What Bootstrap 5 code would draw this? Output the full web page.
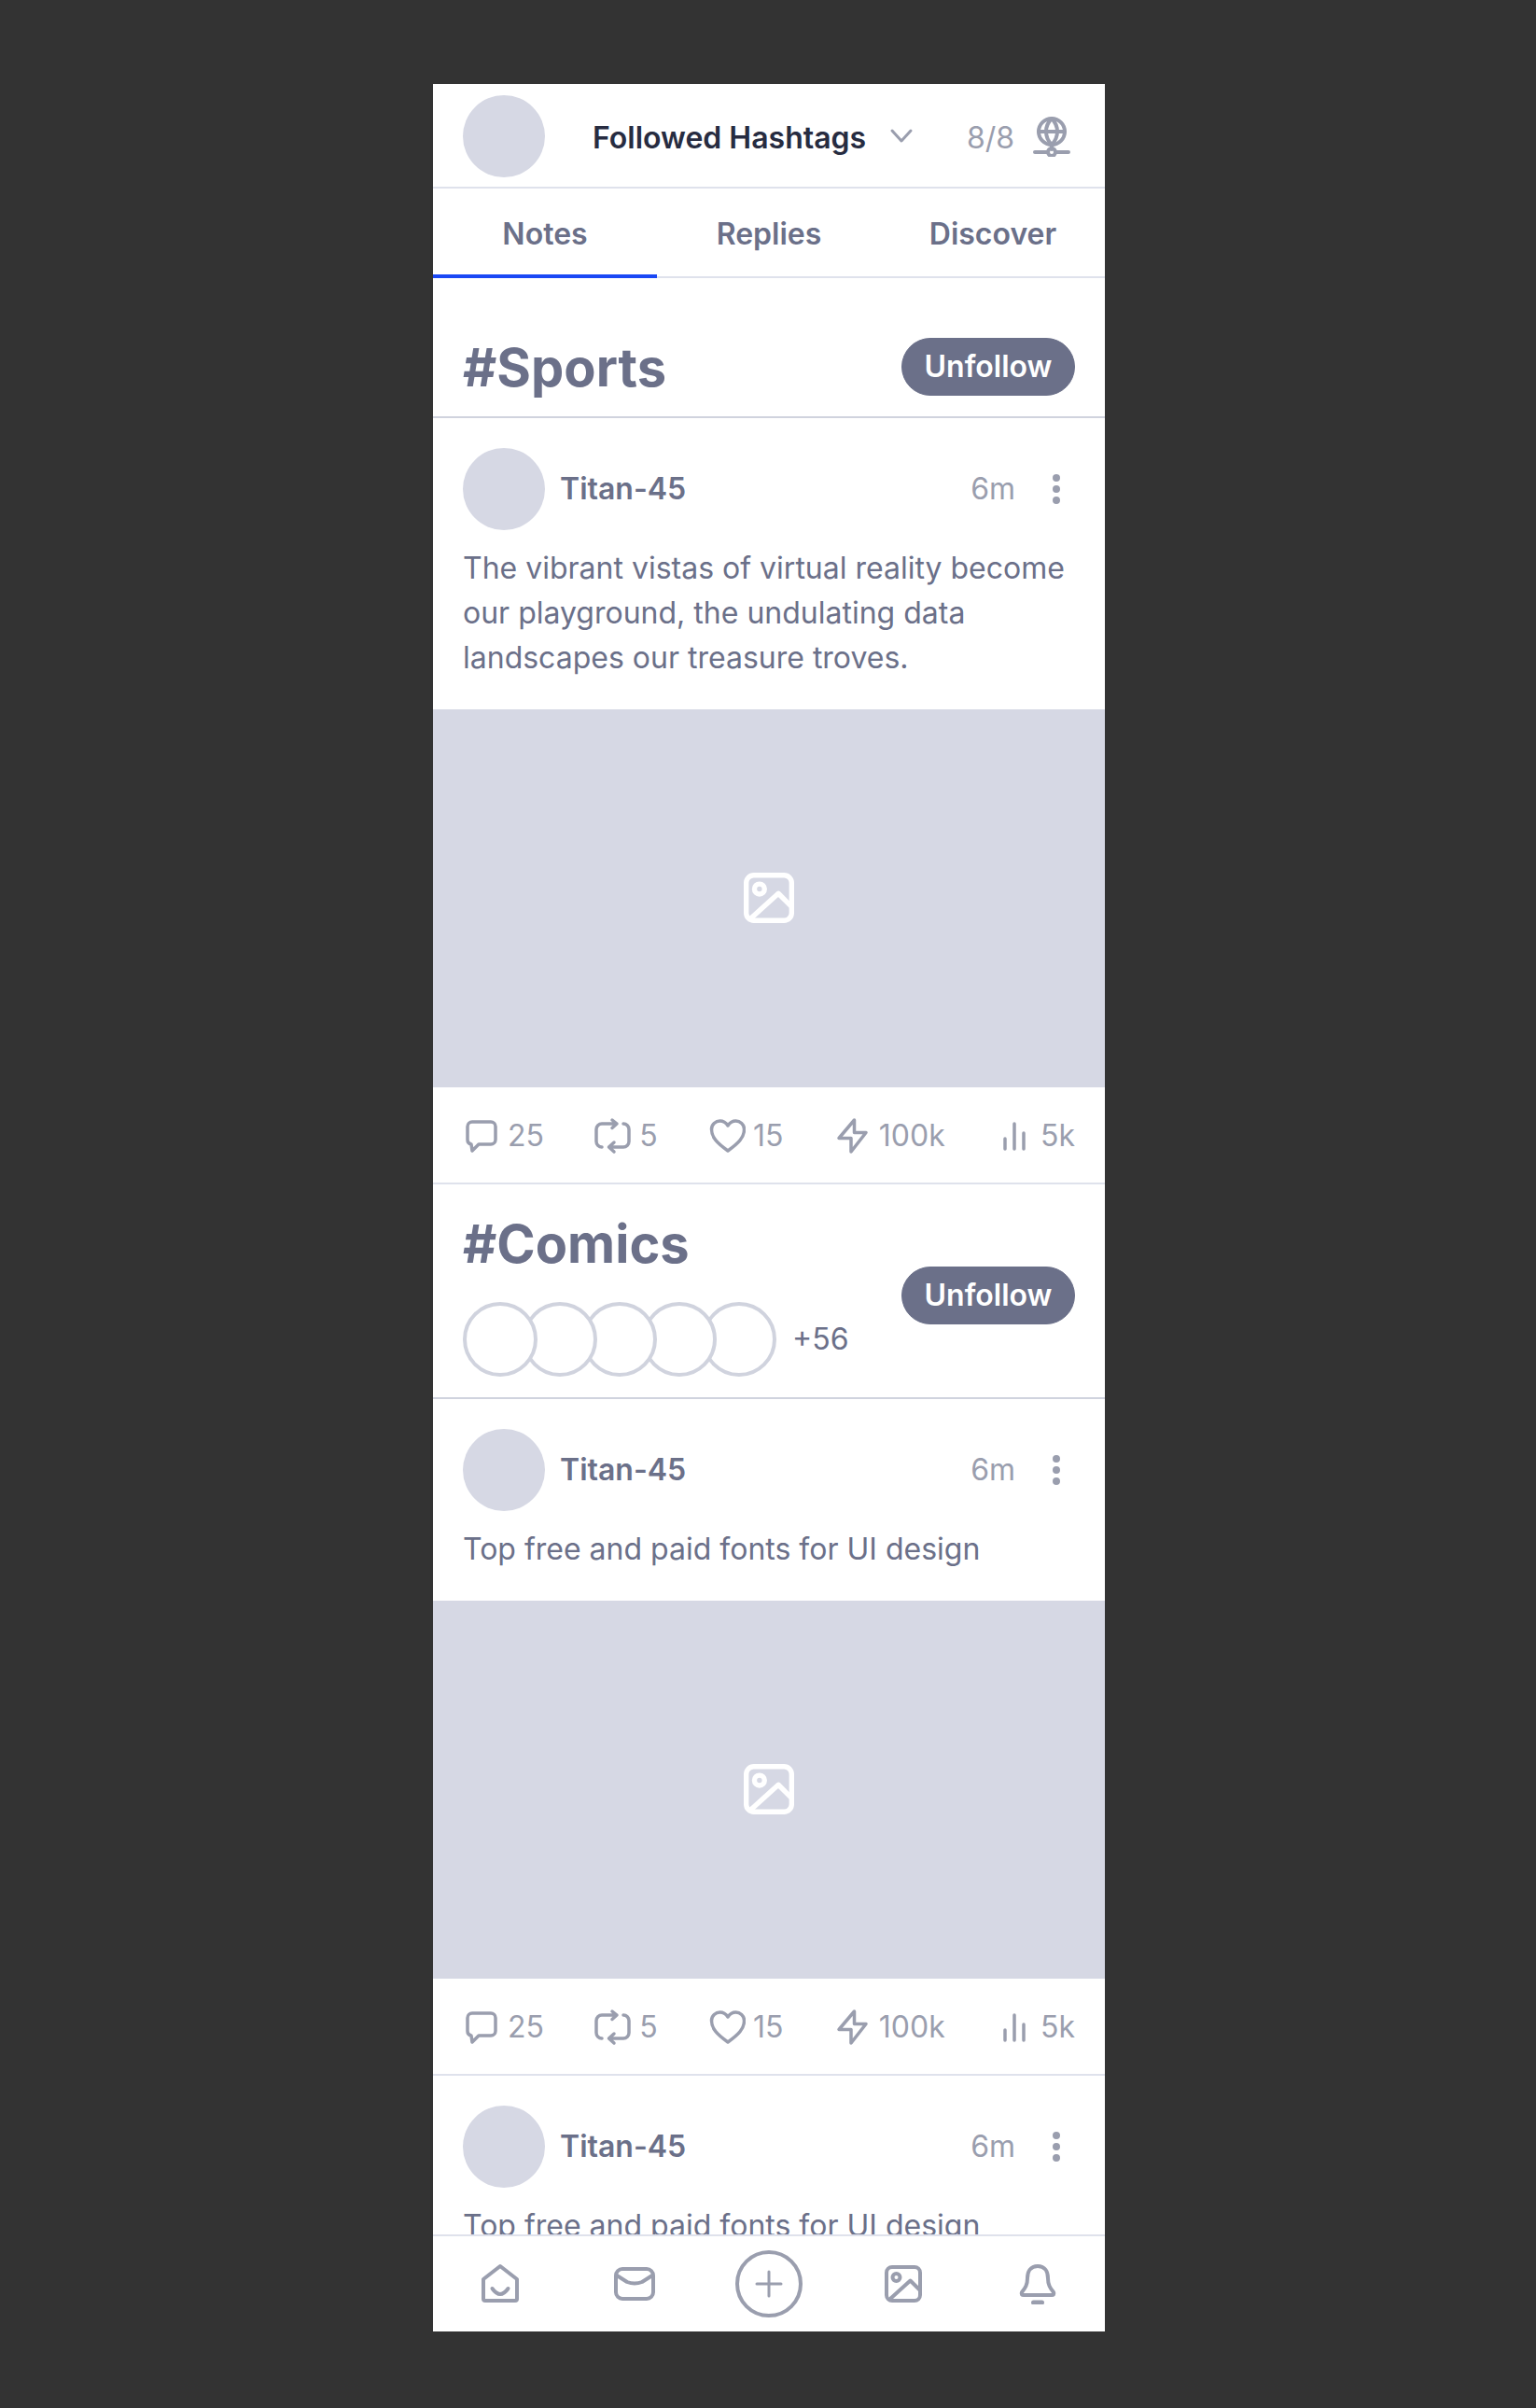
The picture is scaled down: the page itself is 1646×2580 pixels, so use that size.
<!DOCTYPE html>
<html lang="en">

<head>
    <meta charset="UTF-8">
    <meta name="viewport" content="width=device-width, initial-scale=1.0">
    <title>Followed Hashtags</title>
    <link href="https://cdn.jsdelivr.net/npm/bootstrap@5.3.1/dist/css/bootstrap.min.css" rel="stylesheet">
    <style>
        body {
            background: #333333;
            font-family: "Inter", "Liberation Sans", sans-serif;
            font-size: 32px;
            line-height: 48px;
            color: #6b7089;
            min-height: 2580px;
        }

        .phone {
            width: 720px;
            height: 2408px;
            margin: 90px 462px 0 464px;
            background: #fff;
        }

        .thumb {
            width: 88px;
            height: 88px;
            background: #d6d8e4;
        }

        .top-bar {
            padding: 12px 35px 10px 32px;
            border-bottom: 2px solid #dfe2ec;
        }

        .top-title {
            margin: 3px 0 0 51px;
            font-weight: 600;
            color: #272c41;
            white-space: nowrap;
        }

        .top-gap {
            margin-left: 18px;
        }

        .top-count {
            margin-top: 3px;
        }

        .quiet {
            color: #9a9eae;
        }

        .tabs {
            height: 96px;
            border-bottom: 2px solid #dfe2ec;
        }

        .tabs .nav-link {
            height: 96px;
            padding: 25px 0 0;
            font-weight: 600;
            color: #6b7089;
        }

        .tabs .nav-link.active {
            border-bottom: 4px solid #1a48f5;
        }

        .tag-head {
            padding: 32px 32px 22px;
            border-bottom: 2px solid #d0d3de;
        }

        .tag-first {
            padding-top: 64px;
        }

        .tag-name {
            margin: 1px 0 -1px;
            font-size: 56px;
            line-height: 62px;
            font-weight: 700;
            color: #6b7089;
        }

        .tag-rings {
            margin-top: 32px;
        }

        .btn.follow-btn {
            width: 186px;
            height: 62px;
            padding: 0;
            font-size: 32px;
            font-weight: 600;
            line-height: 60px;
            color: #fff;
            background: #6b7089;
            border-color: #6b7089;
        }

        .ring {
            position: relative;
            width: 80px;
            height: 80px;
            background: #fff;
            border: 4px solid #d0d3de;
            margin-left: -16px;
        }

        .ring:first-child {
            margin-left: 0;
            z-index: 5;
        }

        .ring:nth-child(2) {
            z-index: 4;
        }

        .ring:nth-child(3) {
            z-index: 3;
        }

        .ring:nth-child(4) {
            z-index: 2;
        }

        .ring:nth-child(5) {
            z-index: 1;
        }

        .ring-count {
            margin-left: 17px;
        }

        .post-head {
            padding: 32px 32px 0;
        }

        .post-name {
            margin-left: 16px;
            font-weight: 600;
        }

        .post-text {
            padding: 17px 32px 31px;
            margin: 0;
        }

        .post-media {
            height: 405px;
            background: #d6d8e4;
        }

        .stats {
            height: 104px;
            padding: 2px 32px 0;
            border-bottom: 2px solid #dfe2ec;
        }

        .stat {
            gap: 8px;
        }

        .stat .stroke-icon {
            stroke-width: 3.5;
        }

        .tab-bar {
            height: 104px;
            border-top: 2px solid #dfe2ec;
        }

        .tab-bar > div {
            width: 144px;
        }

        .stroke-icon {
            fill: none;
            stroke: #9a9eae;
            stroke-width: 4;
            stroke-linecap: round;
            stroke-linejoin: round;
            flex: none;
        }

        .media-icon {
            stroke: #fff;
            margin-bottom: 2px;
        }
    </style>
</head>

<body>
    <svg class="d-none">
        <symbol id="i-picture" viewBox="0 0 40 40">
            <rect x="2" y="2" width="36" height="36" rx="6" />
            <circle cx="12.5" cy="13" r="4" />
            <path d="M6 36 27.5 16.5 37 26" />
        </symbol>
        <symbol id="i-comment" viewBox="0 0 40 40">
            <path d="M10 5H30a5 5 0 0 1 5 5V24a5 5 0 0 1-5 5H17L10 36 9 29A5 5 0 0 1 5 24V10A5 5 0 0 1 10 5Z" />
        </symbol>
        <symbol id="i-repost" viewBox="0 0 40 40">
            <path d="M19 3 24 7 19 11.5M24 7H8A6 6 0 0 0 2 13V26A6 6 0 0 0 8 32M21 27 15.500 32 21 37M15.500 32H31A6 6 0 0 0 37 26V13A6 6 0 0 0 31 7" />
        </symbol>
        <symbol id="i-heart" viewBox="0 0 40 40">
            <path d="M21 36C10 28 3.500 22 3.500 13 3.500 7.500 8 4 12.500 4 16 4 19 6 21 9 23 6 26 4 29.500 4 34 4 38.500 7.500 38.500 13 38.500 22 32 28 21 36Z" />
        </symbol>
        <symbol id="i-bolt" viewBox="0 0 40 40">
            <path d="M21.500 3 5 22.500H18V37L34 16.500H21.500Z" />
        </symbol>
        <symbol id="i-bars" viewBox="0 0 40 40">
            <path d="M10 23V34M20 7V34M30 17V34" />
        </symbol>
        <symbol id="i-dots" viewBox="0 0 40 40">
            <circle cx="20" cy="8" r="2" />
            <circle cx="20" cy="20" r="2" />
            <circle cx="20" cy="32" r="2" />
        </symbol>
    </svg>

    <div class="phone d-flex flex-column overflow-hidden">
        <div class="top-bar d-flex align-items-center">
            <div class="thumb rounded-circle flex-shrink-0"></div>
            <div class="top-title">Followed Hashtags</div>
            <svg class="stroke-icon top-gap" width="40" height="40" viewBox="0 0 40 40">
                <path d="M10 14 20 25 30 14" stroke-width="3" />
            </svg>
            <span class="quiet top-count ms-auto">8/8</span>
            <svg class="stroke-icon top-gap" width="44" height="44" viewBox="0 0 44 44">
                <circle cx="22" cy="17" r="14" />
                <path d="M8 17H36M22 3C14 11 14 23 22 31 30 23 30 11 22 3ZM22 31V36M4 39H17M27 39H40" />
                <circle cx="22" cy="39" r="4" />
            </svg>
        </div>

        <ul class="tabs nav nav-justified flex-nowrap">
            <li class="nav-item"><a class="nav-link active" href="#">Notes</a></li>
            <li class="nav-item"><a class="nav-link" href="#">Replies</a></li>
            <li class="nav-item"><a class="nav-link" href="#">Discover</a></li>
        </ul>

        <div class="feed flex-grow-1 overflow-hidden">
            <div class="tag-head tag-first d-flex align-items-center justify-content-between">
                <h2 class="tag-name">#Sports</h2>
                <button class="btn follow-btn rounded-pill">Unfollow</button>
            </div>

            <div class="post-head d-flex align-items-center">
                <div class="thumb rounded-circle"></div>
                <div class="post-name">Titan-45</div>
                <span class="quiet ms-auto me-4">6m</span>
                <svg class="stroke-icon" width="40" height="40"><use href="#i-dots" /></svg>
            </div>
            <p class="post-text">The vibrant vistas of virtual reality become our playground, the undulating data landscapes our treasure troves.</p>
            <div class="post-media d-flex align-items-center justify-content-center">
                <svg class="stroke-icon media-icon" width="54" height="54"><use href="#i-picture" /></svg>
            </div>
            <div class="stats d-flex align-items-center justify-content-between quiet">
                <div class="stat d-flex align-items-center"><svg class="stroke-icon" width="40" height="40"><use href="#i-comment" /></svg>25</div>
                <div class="stat d-flex align-items-center"><svg class="stroke-icon" width="40" height="40"><use href="#i-repost" /></svg>5</div>
                <div class="stat d-flex align-items-center"><svg class="stroke-icon" width="40" height="40"><use href="#i-heart" /></svg>15</div>
                <div class="stat d-flex align-items-center"><svg class="stroke-icon" width="40" height="40"><use href="#i-bolt" /></svg>100k</div>
                <div class="stat d-flex align-items-center"><svg class="stroke-icon" width="40" height="40"><use href="#i-bars" /></svg>5k</div>
            </div>

            <div class="tag-head d-flex align-items-center justify-content-between">
                <div>
                    <h2 class="tag-name">#Comics</h2>
                    <div class="tag-rings d-flex align-items-center">
                        <div class="d-flex">
                            <div class="ring rounded-circle"></div>
                            <div class="ring rounded-circle"></div>
                            <div class="ring rounded-circle"></div>
                            <div class="ring rounded-circle"></div>
                            <div class="ring rounded-circle"></div>
                        </div>
                        <span class="ring-count">+56</span>
                    </div>
                </div>
                <button class="btn follow-btn rounded-pill">Unfollow</button>
            </div>

            <div class="post-head d-flex align-items-center">
                <div class="thumb rounded-circle"></div>
                <div class="post-name">Titan-45</div>
                <span class="quiet ms-auto me-4">6m</span>
                <svg class="stroke-icon" width="40" height="40"><use href="#i-dots" /></svg>
            </div>
            <p class="post-text">Top free and paid fonts for UI design</p>
            <div class="post-media d-flex align-items-center justify-content-center">
                <svg class="stroke-icon media-icon" width="54" height="54"><use href="#i-picture" /></svg>
            </div>
            <div class="stats d-flex align-items-center justify-content-between quiet">
                <div class="stat d-flex align-items-center"><svg class="stroke-icon" width="40" height="40"><use href="#i-comment" /></svg>25</div>
                <div class="stat d-flex align-items-center"><svg class="stroke-icon" width="40" height="40"><use href="#i-repost" /></svg>5</div>
                <div class="stat d-flex align-items-center"><svg class="stroke-icon" width="40" height="40"><use href="#i-heart" /></svg>15</div>
                <div class="stat d-flex align-items-center"><svg class="stroke-icon" width="40" height="40"><use href="#i-bolt" /></svg>100k</div>
                <div class="stat d-flex align-items-center"><svg class="stroke-icon" width="40" height="40"><use href="#i-bars" /></svg>5k</div>
            </div>

            <div class="post-head d-flex align-items-center">
                <div class="thumb rounded-circle"></div>
                <div class="post-name">Titan-45</div>
                <span class="quiet ms-auto me-4">6m</span>
                <svg class="stroke-icon" width="40" height="40"><use href="#i-dots" /></svg>
            </div>
            <p class="post-text">Top free and paid fonts for UI design</p>
        </div>

        <div class="tab-bar d-flex align-items-center flex-shrink-0">
            <div class="d-flex justify-content-center">
                <svg class="stroke-icon" width="44" height="44" viewBox="0 0 44 44">
                    <path d="M4 17 22 3 40 17V38A2 2 0 0 1 38 40H6A2 2 0 0 1 4 38Z" />
                    <path d="M13.500 27Q22 39 30.500 27" />
                </svg>
            </div>
            <div class="d-flex justify-content-center">
                <svg class="stroke-icon" width="44" height="44" viewBox="0 0 44 44">
                    <rect x="2" y="6" width="40" height="32" rx="7" />
                    <path d="M3 13 14 20Q22 23 30 20L41 13" />
                </svg>
            </div>
            <div class="d-flex justify-content-center">
                <svg class="stroke-icon" width="72" height="72" viewBox="0 0 72 72">
                    <circle cx="36" cy="36" r="34" />
                    <path d="M36 23V49M23 36H49" stroke-width="3" />
                </svg>
            </div>
            <div class="d-flex justify-content-center">
                <svg class="stroke-icon" width="40" height="40"><use href="#i-picture" /></svg>
            </div>
            <div class="d-flex justify-content-center">
                <svg class="stroke-icon" width="44" height="44" viewBox="0 0 44 44">
                    <path d="M22 3C14 3 11 9 11 16 11 24 8 27 5 31 4 33 5 34 7 34H37C39 34 40 33 39 31 36 27 33 24 33 16 33 9 30 3 22 3Z" />
                    <path d="M17.500 42H26.500" stroke-width="5" />
                </svg>
            </div>
        </div>
    </div>

    <script src="https://cdn.jsdelivr.net/npm/bootstrap@5.3.1/dist/js/bootstrap.bundle.min.js"></script>
</body>

</html>
